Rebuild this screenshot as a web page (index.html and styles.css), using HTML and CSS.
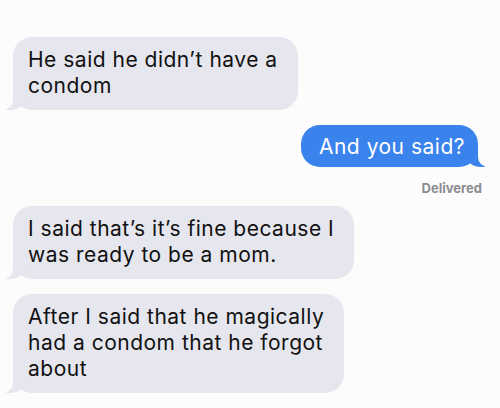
FILE: index.html
```html
<!DOCTYPE html>
<html lang="en">

<head>
    <meta charset="UTF-8" />
    <meta name="viewport" content="width=device-width, initial-scale=1.0" />
    <title>Messages</title>
    <link rel="stylesheet" href="styles.css">
</head>

<body>
    <div class="chat">
        <div class="bubble them">He said he didn’t have a<br>condom</div>
        <div class="bubble me">And you said?</div>
        <div class="status">Delivered</div>
        <div class="bubble them">I said that’s it’s fine because I<br>was ready to be a mom.</div>
        <div class="bubble them">After I said that he magically<br>had a condom that he forgot<br>about</div>
    </div>
</body>

</html>
```

FILE: styles.css
```css
* {
    box-sizing: border-box;
}

body {
    margin: 0;
    background: #fcfcfd;
    font-family: Inter, 'Liberation Sans', sans-serif;
}

.chat {
    display: flex;
    flex-direction: column;
    align-items: flex-start;
    padding: 37px 18px 0 13px;
}

.bubble {
    position: relative;
    font-size: 21px;
    line-height: 26px;
    letter-spacing: 0.5px;
    white-space: nowrap;
    border-radius: 19px;
}

.them {
    background: #e6e6ee;
    color: #111;
    padding: 10px 20px 11px 15px;
    margin-bottom: 15px;
}

.them::before,
.me::before {
    content: "";
    position: absolute;
    bottom: 0;
    width: 20px;
    height: 20px;
}

.them::before {
    left: -7px;
    background: #e6e6ee;
    border-bottom-right-radius: 16px 14px;
}

.them::after,
.me::after {
    content: "";
    position: absolute;
    bottom: 0;
    width: 26px;
    height: 20px;
    background: #fcfcfd;
}

.them::after {
    left: -26px;
    border-bottom-right-radius: 10px;
}

.me {
    align-self: flex-end;
    margin-right: 4px;
    background: #3a82ec;
    color: #fff;
    padding: 9px 13px 7px 18px;
}

.me::before {
    right: -7px;
    background: #3a82ec;
    border-bottom-left-radius: 16px 14px;
}

.me::after {
    right: -26px;
    border-bottom-left-radius: 10px;
}

.status {
    align-self: flex-end;
    margin: 13px 0 10px;
    font-size: 13px;
    line-height: 16px;
    font-weight: 700;
    color: #8c8c91;
}
```
